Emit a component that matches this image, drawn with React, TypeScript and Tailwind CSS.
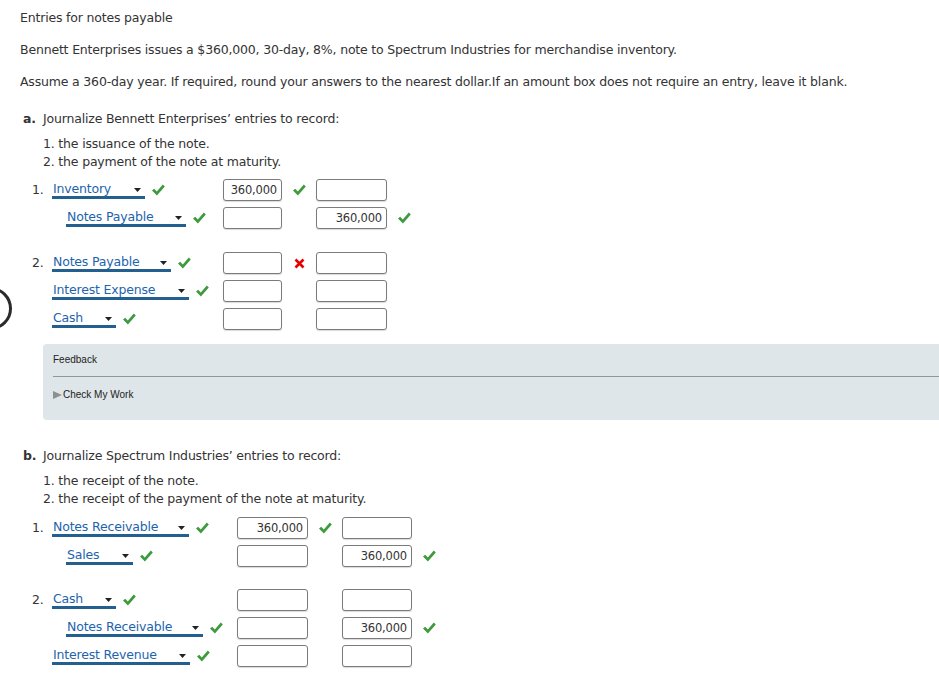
import React from "react";

const Check = () => (
  <svg width="13" height="12" viewBox="0 0 13 12" className="shrink-0">
    <polygon points="0,6.6 2.2,4.8 4.8,7.6 10.8,0.6 12.8,2.4 4.9,11.4" fill="#3d9b3d" />
  </svg>
);

const Cross = () => (
  <svg width="11" height="11" viewBox="0 0 11 11" className="shrink-0">
    <path d="M1.5 1.5 L9.5 9.5 M9.5 1.5 L1.5 9.5" stroke="#e60000" strokeWidth="2.6" strokeLinecap="butt" />
  </svg>
);

type SelProps = { label: string; width: number };
const Sel = ({ label, width }: SelProps) => (
  <div
    className="relative h-[17px] border-b-[3px] border-[#235f8f] bg-white rounded-t-[2px] text-[#1d64ad] leading-[14px] shrink-0"
    style={{ width }}
  >
    <span className="pl-[1px]">{label}</span>
    <svg width="7" height="4" viewBox="0 0 7 4" className="absolute right-[4px] top-[6px]">
      <polygon points="0,0 7,0 3.5,4" fill="#222" />
    </svg>
  </div>
);

const Box = ({ value, width }: { value?: string; width: number }) => (
  <div
    className="h-[22px] border border-[#7b7b7b] rounded-[3px] bg-white shadow-[0_1px_1px_rgba(0,0,0,0.15)] text-right pr-[4px] text-[11.5px] leading-[20px] text-[#333] shrink-0"
    style={{ width }}
  >
    {value}
  </div>
);

type Row = {
  num?: string;
  indent?: boolean;
  label: string;
  selW: number;
  v1?: string;
  m1?: "check" | "cross";
  v2?: string;
  m2?: boolean;
};

const Entry = ({
  rows,
  leftW,
  w1,
  midW,
  w2,
}: {
  rows: Row[];
  leftW: number;
  w1: number;
  midW: number;
  w2: number;
}) => (
  <div className="flex flex-col">
    {rows.map((r, i) => (
      <div key={i} className="flex items-center h-[28px]">
        <div className="flex items-center shrink-0" style={{ width: leftW }}>
          <div className="w-[21px] text-[#333] pl-[1px]">{r.num}</div>
          <div className={r.indent ? "w-[14px] shrink-0" : "w-0"} />
          <Sel label={r.label} width={r.selW} />
          <div className="ml-[7px]">
            <Check />
          </div>
        </div>
        <Box value={r.v1} width={w1} />
        <div className="flex items-center justify-center shrink-0" style={{ width: midW }}>
          {r.m1 === "check" ? <Check /> : r.m1 === "cross" ? <Cross /> : null}
        </div>
        <Box value={r.v2} width={w2} />
        {r.m2 ? (
          <div className="ml-[11px]">
            <Check />
          </div>
        ) : null}
      </div>
    ))}
  </div>
);

export default function App() {
  return (
    <div
      className="relative w-[939px] h-[676px] overflow-hidden bg-white text-[#333] text-[12.5px] tracking-[-0.18px] leading-[18px]"
      style={{ fontFamily: "'DejaVu Sans', Verdana, sans-serif" }}
    >
      <div className="absolute left-[-31px] top-[287px] w-[43px] h-[43px] rounded-full border-[3px] border-[#2b2b2b]" />

      <div className="pl-[20px] pt-[9px]">
        <p>Entries for notes payable</p>
        <p className="mt-[14px]">
          Bennett Enterprises issues a $360,000, 30-day, 8%, note to Spectrum Industries for merchandise inventory.
        </p>
        <p className="mt-[14px]">
          Assume a 360-day year. If required, round your answers to the nearest dollar.If an amount box does not
          require an entry, leave it blank.
        </p>
      </div>

      <div className="mt-[19px] flex pl-[23px]">
        <span className="font-bold w-[20px]">a.</span>
        <span>Journalize Bennett Enterprises’ entries to record:</span>
      </div>
      <div className="mt-[7px] pl-[43px]">
        <div>1. the issuance of the note.</div>
        <div>2. the payment of the note at maturity.</div>
      </div>

      <div className="mt-[5px] pl-[31px]">
        <Entry
          leftW={192}
          w1={59}
          midW={34}
          w2={71}
          rows={[
            { num: "1.", label: "Inventory", selW: 93, v1: "360,000", m1: "check" },
            { indent: true, label: "Notes Payable", selW: 120, v2: "360,000", m2: true },
          ]}
        />
        <div className="mt-[17px]">
          <Entry
            leftW={192}
            w1={59}
            midW={34}
            w2={71}
            rows={[
              { num: "2.", label: "Notes Payable", selW: 119, m1: "cross" },
              { label: "Interest Expense", selW: 137 },
              { label: "Cash", selW: 64 },
            ]}
          />
        </div>
      </div>

      <div
        className="mt-[11px] ml-[43px] h-[76px] bg-[#dfe6e9] rounded-l-[4px] pt-[10px] pl-[10px] text-[10px] leading-[12px] tracking-normal text-[#222]"
        style={{ fontFamily: "'Liberation Sans', Arial, sans-serif" }}
      >
        <div>Feedback</div>
        <div className="mt-[10px] h-px bg-[#8e9899]" />
        <div className="mt-[12px] flex items-center">
          <svg width="9" height="8" viewBox="0 0 9 8" className="mr-[1px]">
            <polygon points="0,0 9,4 0,8" fill="#8d9091" />
          </svg>
          <span>Check My Work</span>
        </div>
      </div>

      <div className="mt-[27px] flex pl-[23px]">
        <span className="font-bold w-[20px]">b.</span>
        <span>Journalize Spectrum Industries’ entries to record:</span>
      </div>
      <div className="mt-[7px] pl-[43px]">
        <div>1. the receipt of the note.</div>
        <div>2. the receipt of the payment of the note at maturity.</div>
      </div>

      <div className="mt-[6px] pl-[31px]">
        <Entry
          leftW={206}
          w1={71}
          midW={34}
          w2={70}
          rows={[
            { num: "1.", label: "Notes Receivable", selW: 137, v1: "360,000", m1: "check" },
            { indent: true, label: "Sales", selW: 67, v2: "360,000", m2: true },
          ]}
        />
        <div className="mt-[16px]">
          <Entry
            leftW={206}
            w1={71}
            midW={34}
            w2={70}
            rows={[
              { num: "2.", label: "Cash", selW: 64 },
              { indent: true, label: "Notes Receivable", selW: 137, v2: "360,000", m2: true },
              { label: "Interest Revenue", selW: 138 },
            ]}
          />
        </div>
      </div>
    </div>
  );
}
